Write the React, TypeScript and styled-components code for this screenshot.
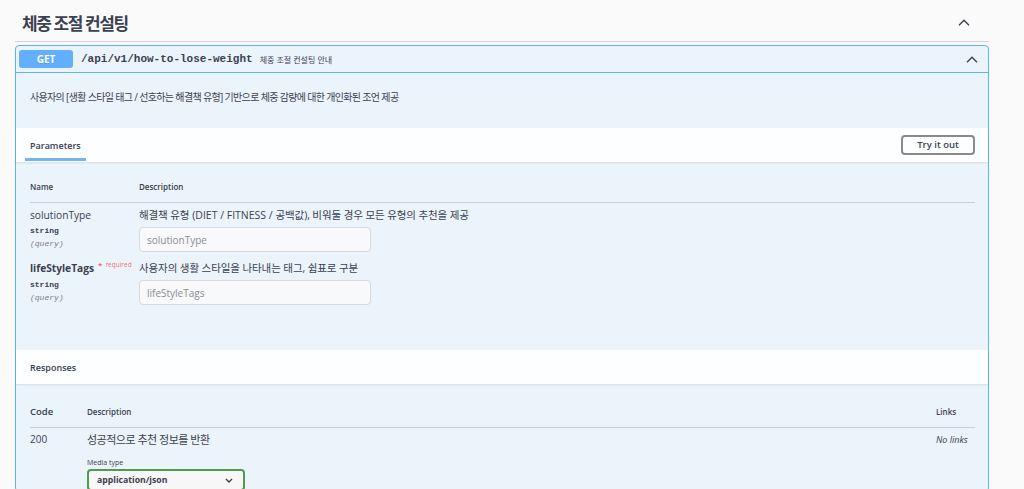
import React from "react";
import styled, { createGlobalStyle } from "styled-components";

const GlobalStyle = createGlobalStyle`
  html, body { margin: 0; padding: 0; background: #fafafa; }
  body { font-family: "Open Sans", "Noto Sans CJK KR", sans-serif; color: #3b4151; }
  * { box-sizing: border-box; }
`;

const Page = styled.div`
  width: 1024px;
  height: 489px;
  overflow: hidden;
  padding: 0 35px 0 15px;
`;

const TagHeader = styled.div`
  display: flex;
  align-items: center;
  justify-content: space-between;
  height: 42px;
  padding: 3px 19px 0 7px;
  border-bottom: 1px solid rgba(59, 65, 81, 0.2);
  margin-bottom: 3px;
`;

const TagTitle = styled.h3`
  margin: 0;
  font-size: 17px;
  font-weight: 700;
  letter-spacing: -1.4px;
  color: #3b4151;
`;

const Chevron = styled.svg`
  display: block;
  flex: none;
`;

const Opblock = styled.div`
  border: 1px solid #61affe;
  border-radius: 4px;
  background: #ebf3fb;
`;

const Summary = styled.div`
  display: flex;
  align-items: center;
  padding: 4px 10px 4px 3px;
  border-bottom: 1px solid #61affe;
`;

const MethodBadge = styled.span`
  display: inline-flex;
  align-items: center;
  justify-content: center;
  width: 54px;
  height: 18px;
  border-radius: 3px;
  background: #61affe;
  color: #fff;
  font-size: 10px;
  font-weight: 700;
  text-shadow: 0 1px 0 rgba(0, 0, 0, 0.1);
`;

const PathText = styled.span`
  margin-left: 8px;
  font-family: "Liberation Mono", "DejaVu Sans Mono", monospace;
  font-size: 11px;
  font-weight: 700;
  color: #3b4151;
`;

const SummaryDesc = styled.span`
  margin-left: 7px;
  font-size: 8px;
  color: #3b4151;
  flex: 1;
`;

const Description = styled.div`
  padding: 17px 14px 23px;
  font-size: 10px;
  line-height: 15px;
`;

const Hangul = styled.span<{ $tight?: number }>`
  letter-spacing: ${(p) => p.$tight ?? 0}px;
`;

const SectionHeader = styled.div`
  display: flex;
  align-items: stretch;
  justify-content: space-between;
  height: 34px;
  padding: 0 13px 0 9px;
  background: rgba(255, 255, 255, 0.85);
  box-shadow: 0 1px 2px rgba(0, 0, 0, 0.1);
`;

const Tab = styled.div<{ $active?: boolean }>`
  position: relative;
  display: flex;
  align-items: center;
  padding: 0 5px;
  font-size: 9px;
  font-weight: 600;
  &::after {
    content: "";
    display: ${(p) => (p.$active ? "block" : "none")};
    position: absolute;
    left: 0;
    right: 0;
    bottom: 1px;
    height: 3px;
    background: #74b2f2;
  }
`;

const TryButton = styled.button`
  align-self: center;
  width: 74px;
  height: 20px;
  margin-top: -1px;
  border: 2px solid #8a8a8a;
  border-radius: 4px;
  background: transparent;
  font-family: "Open Sans", sans-serif;
  font-size: 9.5px;
  font-weight: 600;
  color: #3b4151;
  padding: 0;
`;

const ParamsBody = styled.div`
  padding: 16px 13px 41px 14px;
`;

const ParamGrid = styled.div`
  display: grid;
  grid-template-columns: 109px 1fr;
`;

const HeadCell = styled.div<{ $size?: number }>`
  padding: 2px 0 8px;
  font-size: ${(p) => p.$size ?? 8}px;
  line-height: 14px;
  font-weight: 600;
  border-bottom: 1px solid rgba(59, 65, 81, 0.2);
`;

const Cell = styled.div`
  padding: 5px 0 4px;
`;

const ParamName = styled.div<{ $required?: boolean }>`
  font-size: 10.2px;
  line-height: 15px;
  font-weight: ${(p) => (p.$required ? 700 : 400)};
  margin-bottom: 1px;
  white-space: nowrap;
`;

const RequiredMark = styled.span`
  position: relative;
  top: -4px;
  margin-left: 4px;
  font-size: 8px;
  font-weight: 400;
  color: #f33;
`;

const RequiredText = styled.span`
  position: relative;
  top: -5px;
  margin-left: 3px;
  font-size: 6.5px;
  font-weight: 400;
  color: rgba(255, 0, 0, 0.6);
`;

const ParamType = styled.div<{ $italic?: boolean }>`
  font-family: "Liberation Mono", "DejaVu Sans Mono", monospace;
  font-size: 8px;
  line-height: 13px;
  font-weight: ${(p) => (p.$italic ? 400 : 700)};
  font-style: ${(p) => (p.$italic ? "italic" : "normal")};
  color: ${(p) => (p.$italic ? "#808080" : "#3b4151")};
`;

const ParamDesc = styled.div`
  font-size: 10.5px;
  line-height: 15px;
  white-space: nowrap;
`;

const TextInput = styled.input`
  display: block;
  margin-top: 4px;
  width: 232px;
  height: 25px;
  padding: 0 7px;
  border: 1px solid #d9d9d9;
  border-radius: 4px;
  background: #f8f9fa;
  font-family: "Open Sans", sans-serif;
  font-size: 10px;
  color: #3b4151;
  outline: none;
  &::placeholder { color: #8a8c90; }
`;

const ResponsesBody = styled.div`
  padding: 19px 13px 0 14px;
`;

const ResponseGrid = styled.div`
  display: grid;
  grid-template-columns: 57px 1fr 39px;
`;

const CodeCell = styled.div`
  padding: 4px 0 0;
  font-size: 10px;
  line-height: 15px;
`;

const ResponseDesc = styled.div`
  font-size: 11px;
  line-height: 15px;
`;

const MediaLabel = styled.div`
  margin-top: 11px;
  font-size: 7px;
  line-height: 9px;
  color: #3b4151;
`;

const SelectBox = styled.div`
  margin-top: 2px;
  display: flex;
  align-items: center;
  justify-content: space-between;
  width: 158px;
  height: 22px;
  padding: 0 10px 0 8px;
  border: 2px solid #4f9c4f;
  border-radius: 4px;
  background: #f7f7f7;
  font-size: 8.7px;
  font-weight: 700;
`;

const NoLinks = styled.div`
  padding-top: 4px;
  font-size: 9px;
  line-height: 15px;
  font-style: italic;
  white-space: nowrap;
`;

const UpCaret = ({ w = 12 }: { w?: number }) => (
  <Chevron width={w} height={7} viewBox="0 0 12 7">
    <path d="M1 6.2 L6 1.2 L11 6.2" fill="none" stroke="#3b4151" strokeWidth="1.4" />
  </Chevron>
);

export default function App() {
  return (
    <>
      <GlobalStyle />
      <Page>
        <TagHeader>
          <TagTitle>체중 조절 컨설팅</TagTitle>
          <UpCaret />
        </TagHeader>
        <Opblock>
          <Summary>
            <MethodBadge>GET</MethodBadge>
            <PathText>/api/v1/how-to-lose-weight</PathText>
            <SummaryDesc>체중 조절 컨설팅 안내</SummaryDesc>
            <UpCaret />
          </Summary>
          <Description>
            <Hangul $tight={-0.66}>
              사용자의 [생활 스타일 태그 / 선호하는 해결책 유형] 기반으로 체중 감량에 대한 개인화된 조언 제공
            </Hangul>
          </Description>
          <SectionHeader>
            <Tab $active>Parameters</Tab>
            <TryButton>Try it out</TryButton>
          </SectionHeader>
          <ParamsBody>
            <ParamGrid>
              <HeadCell>Name</HeadCell>
              <HeadCell>Description</HeadCell>
              <Cell>
                <ParamName>solutionType</ParamName>
                <ParamType>string</ParamType>
                <ParamType $italic>(query)</ParamType>
              </Cell>
              <Cell>
                <ParamDesc>
                  <Hangul $tight={-0.1}>해결책 유형</Hangul> (DIET / FITNESS /{" "}
                  <Hangul $tight={-0.1}>공백값), 비워둘 경우 모든 유형의 추천을 제공</Hangul>
                </ParamDesc>
                <TextInput placeholder="solutionType" />
              </Cell>
              <Cell>
                <ParamName $required>
                  lifeStyleTags<RequiredMark>*</RequiredMark>
                  <RequiredText>required</RequiredText>
                </ParamName>
                <ParamType>string</ParamType>
                <ParamType $italic>(query)</ParamType>
              </Cell>
              <Cell>
                <ParamDesc>
                  <Hangul $tight={-0.1}>사용자의 생활 스타일을 나타내는 태그, 쉼표로 구분</Hangul>
                </ParamDesc>
                <TextInput placeholder="lifeStyleTags" />
              </Cell>
            </ParamGrid>
          </ParamsBody>
          <SectionHeader>
            <Tab>Responses</Tab>
          </SectionHeader>
          <ResponsesBody>
            <ResponseGrid>
              <HeadCell $size={9.5}>Code</HeadCell>
              <HeadCell>Description</HeadCell>
              <HeadCell>Links</HeadCell>
              <CodeCell>200</CodeCell>
              <CodeCell>
                <ResponseDesc>
                  <Hangul $tight={-0.5}>성공적으로 추천 정보를 반환</Hangul>
                </ResponseDesc>
                <MediaLabel>Media type</MediaLabel>
                <SelectBox>
                  application/json
                  <Chevron width={8} height={5} viewBox="0 0 8 5">
                    <path d="M1 1 L4 4 L7 1" fill="none" stroke="#3b4151" strokeWidth="1.4" />
                  </Chevron>
                </SelectBox>
              </CodeCell>
              <NoLinks>No links</NoLinks>
            </ResponseGrid>
          </ResponsesBody>
        </Opblock>
      </Page>
    </>
  );
}
